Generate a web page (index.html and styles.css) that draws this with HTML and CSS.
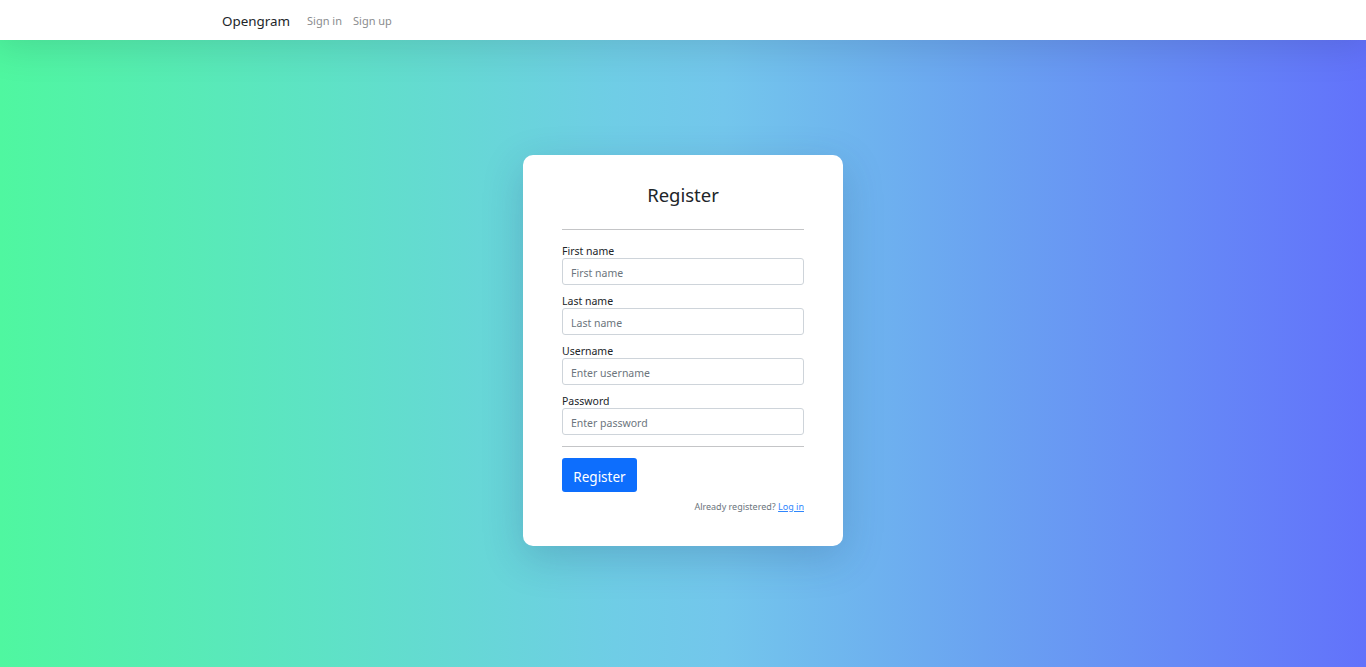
FILE: index.html
```html
<!DOCTYPE html>
<html lang="en">
<head>
<meta charset="utf-8">
<title>Opengram - Register</title>
<link rel="stylesheet" href="styles.css">
</head>
<body>
<nav class="navbar">
  <div class="nav-inner">
    <a class="brand" href="#">Opengram</a>
    <a class="nav-link" href="#">Sign in</a>
    <a class="nav-link" href="#">Sign up</a>
  </div>
</nav>
<main class="page">
  <form class="card">
    <h1 class="title">Register</h1>
    <hr class="rule rule-top">
    <div class="group">
      <label class="label">First name</label>
      <input class="input" type="text" placeholder="First name">
    </div>
    <div class="group">
      <label class="label">Last name</label>
      <input class="input" type="text" placeholder="Last name">
    </div>
    <div class="group">
      <label class="label">Username</label>
      <input class="input" type="text" placeholder="Enter username">
    </div>
    <div class="group last">
      <label class="label">Password</label>
      <input class="input" type="password" placeholder="Enter password">
    </div>
    <hr class="rule rule-bottom">
    <button class="btn" type="button">Register</button>
    <p class="note">Already registered? <a href="#">Log in</a></p>
  </form>
</main>
</body>
</html>
```
FILE: styles.css
```css
* { box-sizing: border-box; }
html, body { margin: 0; height: 100%; }
body {
  font-family: "Noto Sans", "Open Sans", "DejaVu Sans", sans-serif;
  color: #212529;
  background: linear-gradient(to right, #4ff7a0 0%, #5ee2c6 24%, #6fcde6 45%, #73c6ec 53%, #6aa3f1 72%, #6272fb 100%);
  overflow: hidden;
}
.navbar {
  height: 40px;
  background: #fff;
  position: relative;
  z-index: 2;
  box-shadow: 0 0 40px 6px rgba(0, 0, 0, 0.12);
}
.nav-inner {
  width: 922px;
  margin: 0 auto;
  height: 40px;
  display: flex;
  align-items: center;
}
.brand {
  font-size: 13.4px;
  color: #212529;
  text-decoration: none;
  margin-right: 17px;
  margin-top: 1px;
}
.nav-link {
  font-size: 11px;
  color: #8a8c8e;
  text-decoration: none;
  margin-right: 11px;
  margin-top: 1px;
}
.page {
  display: flex;
  justify-content: center;
  padding-top: 115px;
}
.card {
  width: 320px;
  height: 391px;
  background: #fff;
  border-radius: 10px;
  padding: 26px 39px 0;
  box-shadow: 0 12px 40px rgba(30, 60, 110, 0.22);
}
.title {
  margin: 0;
  text-align: center;
  font-weight: 400;
  font-size: 18.5px;
  line-height: 28px;
  color: #212529;
}
.rule {
  border: 0;
  border-top: 1px solid #c4c5c7;
  margin: 0;
}
.rule-top { margin-top: 20px; margin-bottom: 14px; }
.rule-bottom { margin-top: 11px; margin-bottom: 11px; }
.group { display: flex; flex-direction: column; margin-bottom: 9px; }
.group.last { margin-bottom: 0; }
.label {
  font-size: 10.5px;
  line-height: 14px;
  color: #212529;
}
.input {
  height: 27px;
  width: 100%;
  border: 1px solid #ced4da;
  border-radius: 3px;
  padding: 2px 8px 0;
  font-family: inherit;
  font-size: 10.5px;
  color: #212529;
  background: #fff;
}
.input::placeholder { color: #6c757d; }
.btn {
  display: block;
  height: 34px;
  width: 75px;
  border: 0;
  border-radius: 3px;
  background: #0d6efd;
  color: #fff;
  font-family: inherit;
  font-size: 13.5px;
  padding: 3px 0 0;
}
.note {
  margin: 9px 0 0;
  text-align: right;
  font-size: 9px;
  line-height: 12px;
  color: #6c757d;
}
.note a { color: #2f86fd; }
```
